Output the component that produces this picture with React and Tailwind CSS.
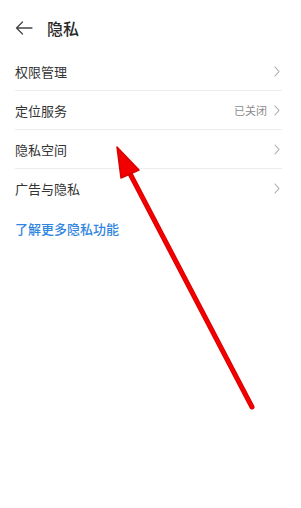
const rows = [
  { label: '权限管理' },
  { label: '定位服务', value: '已关闭' },
  { label: '隐私空间' },
  { label: '广告与隐私' },
];

function Chevron() {
  return (
    <svg width="6" height="11" viewBox="0 0 6 11" fill="none" className="shrink-0">
      <path d="M1 1l4 4.5-4 4.5" stroke="#a8a8a8" strokeWidth="1.1" strokeLinecap="round" strokeLinejoin="round" />
    </svg>
  );
}

export default function App() {
  return (
    <div className="relative w-[301px] h-[508px] bg-white overflow-hidden" style={{ fontFamily: '"Noto Sans CJK SC", "Noto Sans", sans-serif' }}>
      {/* header */}
      <div className="h-[52px] flex items-center pl-[15px] pt-[3px]">
        <svg width="18" height="14" viewBox="0 0 18 14" fill="none">
          <path d="M17 7H1.5M7.5 1L1.5 7l6 6" stroke="#444" strokeWidth="1.3" strokeLinecap="round" strokeLinejoin="round" />
        </svg>
        <span className="ml-[14px] text-[16px] font-medium text-[#2b2b2b] leading-none">隐私</span>
      </div>

      {/* list */}
      <div className="ml-[15px] mr-[19px]">
        {rows.map((r, i) => (
          <div key={r.label} className={`h-[39px] flex items-center ${i < rows.length - 1 ? 'border-b border-[#ededed]' : ''}`}>
            <span className="text-[13px] text-[#333] leading-none">{r.label}</span>
            <div className="ml-auto flex items-center pr-[2px]">
              {r.value && <span className="text-[11px] text-[#8c8c8c] mr-[7px] leading-none">{r.value}</span>}
              <Chevron />
            </div>
          </div>
        ))}
      </div>

      <div className="ml-[15px] mt-[14px] text-[13px] font-medium text-[#2f86e0] leading-none">了解更多隐私功能</div>

      {/* red annotation arrow */}
      <svg className="absolute left-0 top-0 pointer-events-none" width="301" height="508" viewBox="0 0 301 508">
        <line x1="252" y1="407" x2="126" y2="166" stroke="#d80000" strokeWidth="5" strokeLinecap="round" />
        <line x1="252" y1="407" x2="126" y2="166" stroke="#f20000" strokeWidth="3.5" strokeLinecap="round" />
        <path d="M117 147 L121 178 L139 170 Z" fill="#f20000" stroke="#d80000" strokeWidth="1.5" strokeLinejoin="round" />
      </svg>
    </div>
  );
}
